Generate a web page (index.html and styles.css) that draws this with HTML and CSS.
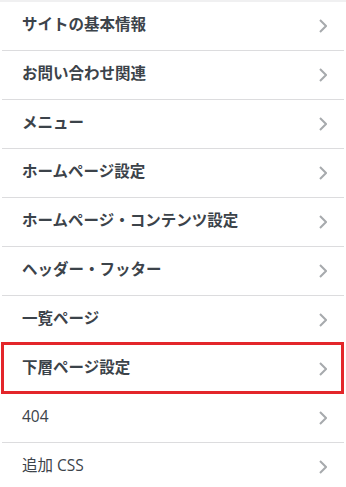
FILE: index.html
```html
<!DOCTYPE html>
<html lang="ja">
<head>
<meta charset="utf-8">
<link rel="stylesheet" href="styles.css">
</head>
<body>
<div class="topbar"></div>
<ul class="menu">
  <li class="item bold"><span class="label">サイトの基本情報</span><svg class="chev" viewBox="0 0 8 14"><path d="M1 1 L7 7 L1 13"/></svg></li>
  <li class="item bold"><span class="label">お問い合わせ関連</span><svg class="chev" viewBox="0 0 8 14"><path d="M1 1 L7 7 L1 13"/></svg></li>
  <li class="item bold"><span class="label">メニュー</span><svg class="chev" viewBox="0 0 8 14"><path d="M1 1 L7 7 L1 13"/></svg></li>
  <li class="item bold"><span class="label">ホームページ設定</span><svg class="chev" viewBox="0 0 8 14"><path d="M1 1 L7 7 L1 13"/></svg></li>
  <li class="item bold"><span class="label">ホームページ・コンテンツ設定</span><svg class="chev" viewBox="0 0 8 14"><path d="M1 1 L7 7 L1 13"/></svg></li>
  <li class="item bold"><span class="label">ヘッダー・フッター</span><svg class="chev" viewBox="0 0 8 14"><path d="M1 1 L7 7 L1 13"/></svg></li>
  <li class="item bold"><span class="label">一覧ページ</span><svg class="chev" viewBox="0 0 8 14"><path d="M1 1 L7 7 L1 13"/></svg></li>
  <li class="item bold highlight"><span class="label">下層ページ設定</span><svg class="chev" viewBox="0 0 8 14"><path d="M1 1 L7 7 L1 13"/></svg></li>
  <li class="item"><span class="label">404</span><svg class="chev" viewBox="0 0 8 14"><path d="M1 1 L7 7 L1 13"/></svg></li>
  <li class="item"><span class="label">追加 CSS</span><svg class="chev" viewBox="0 0 8 14"><path d="M1 1 L7 7 L1 13"/></svg></li>
</ul>
</body>
</html>
```

FILE: styles.css
```css
html, body {
  margin: 0;
  padding: 0;
  background: #fff;
}
body {
  font-family: "Open Sans", "Noto Sans CJK JP", sans-serif;
  color: #3c434a;
  overflow: hidden;
}
.topbar {
  height: 2px;
  background: #f0f0f1;
}
.menu {
  list-style: none;
  margin: 0;
  padding: 0;
}
.item {
  position: relative;
  height: 48px;
  margin: 0 2px;
  padding: 0 17px 0 20px;
  border-bottom: 1px solid #dcdcde;
  display: flex;
  align-items: center;
  justify-content: space-between;
  font-size: 15.5px;
  font-weight: 400;
}
.item.bold {
  font-weight: 700;
}
.label {
  line-height: 1;
  position: relative;
  top: -1px;
}
.chev {
  width: 8px;
  height: 14px;
  fill: none;
  stroke: #a7aaad;
  stroke-width: 2;
}
.highlight::after {
  content: "";
  position: absolute;
  left: -1px;
  right: 0;
  top: -3px;
  bottom: -1px;
  border: 3px solid #e3262a;
  pointer-events: none;
}
```
